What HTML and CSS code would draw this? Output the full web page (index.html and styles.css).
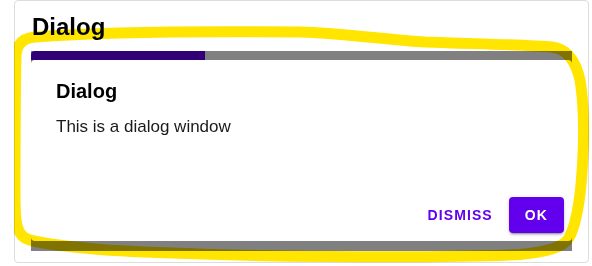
FILE: index.html
```html
<!DOCTYPE html>
<html lang="en">
<head>
<meta charset="utf-8">
<title>Dialog</title>
<link rel="stylesheet" href="styles.css">
</head>
<body>
<div class="card">
  <h1 class="card-title">Dialog</h1>
  <div class="scrim">
    <div class="progress"><div class="progress-fill" style="width:174px"></div></div>
    <div class="dialog">
      <h2 class="dialog-title">Dialog</h2>
      <p class="dialog-content">This is a dialog window</p>
      <div class="dialog-actions">
        <button class="btn btn-text">Dismiss</button>
        <button class="btn btn-filled">OK</button>
      </div>
    </div>
    <div class="scrim-bottom"></div>
  </div>
</div>
<svg class="highlight" width="592" height="266" viewBox="0 0 592 266" aria-hidden="true">
  <defs>
    <clipPath id="cardclip"><rect x="14" y="0" width="575" height="263" rx="4"/></clipPath>
  </defs>
  <path clip-path="url(#cardclip)" class="highlight-stroke" d="M 35 37 C 100 32, 200 31, 300 32 C 340 33, 370 38, 425 42 C 480 44, 530 45, 552 47 C 568 49, 576 62, 580 80 C 585 110, 584 150, 581 185 C 579 205, 576 225, 569 238 C 563 248, 545 252, 520 254.5 C 470 257, 400 257, 330 256.5 C 250 256, 150 253, 100 249.5 C 60 246, 35 243, 25 238 C 15 232, 15 215, 15 195 C 15 150, 15 100, 16 55 C 17 45, 22 38, 35 37 Z"/>
</svg>
</body>
</html>
```
FILE: styles.css
```css
* { box-sizing: border-box; }
html, body { margin: 0; padding: 0; background: #fff; }
body {
  font-family: "Liberation Sans", Arial, sans-serif;
  color: #000;
  width: 592px;
  height: 266px;
  overflow: hidden;
}
.card {
  margin-left: 14px;
  width: 575px;
  border: 1px solid #dcdcdc;
  border-radius: 4px;
  padding: 12px 16px 11px 16px;
}
.card-title {
  margin: 0 0 10px 1px;
  font-size: 24px;
  line-height: 28px;
  font-weight: bold;
}
.scrim {
  height: 200px;
  background: #808080;
  display: flex;
  flex-direction: column;
}
.progress {
  height: 9px;
  flex: none;
  background: #808080;
}
.progress-fill {
  height: 100%;
  background: #310077;
  border-top-left-radius: 4px;
}
.dialog {
  flex: 1;
  background: #fff;
  border-radius: 4px;
  padding: 19px 8px 8px 25px;
  display: flex;
  flex-direction: column;
}
.scrim-bottom { height: 10px; flex: none; }
.dialog-title {
  margin: 0;
  font-size: 20px;
  line-height: 24px;
  font-weight: bold;
}
.dialog-content {
  margin: 12px 0 0;
  font-size: 17px;
  line-height: 24px;
  color: #1a1a1a;
}
.dialog-actions {
  margin-top: auto;
  display: flex;
  justify-content: flex-end;
  gap: 8px;
}
.btn {
  font-family: "Liberation Sans", Arial, sans-serif;
  font-size: 14px;
  font-weight: bold;
  letter-spacing: 1.1px;
  text-transform: uppercase;
  height: 36px;
  border: none;
  border-radius: 4px;
  display: flex;
  align-items: center;
  justify-content: center;
  cursor: pointer;
}
.btn-text {
  background: transparent;
  color: #6200ee;
  padding: 0 8px;
}
.btn-filled {
  background: #6200ee;
  color: #fff;
  padding: 0 16px;
  box-shadow: 0 3px 1px -2px rgba(0,0,0,.2), 0 2px 2px 0 rgba(0,0,0,.14), 0 1px 5px 0 rgba(0,0,0,.12);
}
.highlight {
  position: absolute;
  left: 0;
  top: 0;
  pointer-events: none;
  mix-blend-mode: multiply;
}
.highlight-stroke {
  fill: none;
  stroke: #ffe500;
  stroke-width: 11;
  stroke-linecap: round;
  stroke-linejoin: round;
}
```
